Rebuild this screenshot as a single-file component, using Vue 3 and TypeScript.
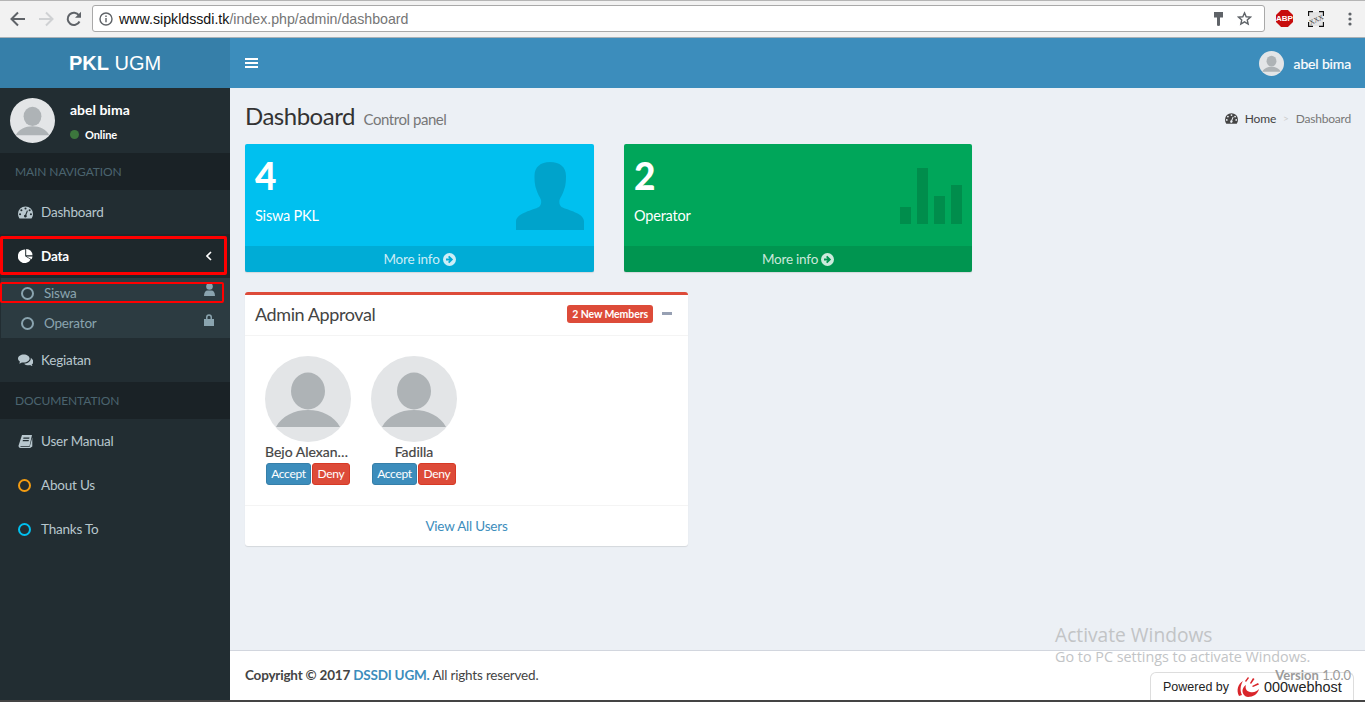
<script setup lang="ts">
const mainNav = [
  { label: 'Dashboard', icon: 'gauge' },
]
const users = [
  { name: 'Bejo Alexander', id: 1 },
  { name: 'Fadilla', id: 2 },
]
</script>

<template>
  <div class="page">
    <svg width="0" height="0" class="defs">
      <symbol id="avatar" viewBox="0 0 86 86">
        <circle cx="43" cy="43" r="43" fill="#e3e5e7" />
        <ellipse cx="43" cy="35" rx="17" ry="18.5" fill="#aeb3b6" />
        <path d="M11 71 C17 60 29 54 43 54 C57 54 69 60 75 71 Z" fill="#aeb3b6" />
      </symbol>
      <symbol id="gauge" viewBox="0 0 16 13">
        <path fill-rule="evenodd" d="M8 0a8 8 0 0 1 8 8c0 1.700-.5 3.200-1.400 4.500-.2.300-.4.500-.7.500H2.100c-.3 0-.5-.2-.7-.5A8 8 0 0 1 0 8a8 8 0 0 1 8-8zM8 1.200a1.100 1.100 0 1 0 0 2.200 1.100 1.100 0 0 0 0-2.200zM3.600 3a1.100 1.100 0 1 0 0 2.200 1.100 1.100 0 0 0 0-2.200zM12.400 3a1.100 1.100 0 1 0 0 2.200 1.100 1.100 0 0 0 0-2.200zM2.200 7.200a1.100 1.100 0 1 0 0 2.200 1.100 1.100 0 0 0 0-2.200zM13.800 7.200a1.100 1.100 0 1 0 0 2.200 1.100 1.100 0 0 0 0-2.200zM9.500 4.300l-1.800 4.500a1.500 1.500 0 1 0 1.200.4l1.700-4.500z" />
      </symbol>
    </svg>

    <header class="browser">
      <div class="nav-icons">
        <svg width="16" height="16" viewBox="0 0 16 16"><path d="M15 8H2.500M8 1.500 1.500 8 8 14.500" fill="none" stroke="#5f6368" stroke-width="2" /></svg>
        <svg width="16" height="16" viewBox="0 0 16 16"><path d="M1 8h12.500M8 1.500 14.500 8 8 14.500" fill="none" stroke="#cfd1d3" stroke-width="2" /></svg>
        <svg width="16" height="16" viewBox="0 0 16 16"><path d="M13.500 10.500A6.200 6.200 0 1 1 13 4.300" fill="none" stroke="#5f6368" stroke-width="2" /><path d="M15 0.800v6h-6z" fill="#5f6368" /></svg>
      </div>
      <div class="omnibox">
        <svg class="info" width="14" height="14" viewBox="0 0 14 14"><circle cx="7" cy="7" r="6" fill="none" stroke="#5f6368" stroke-width="1.400" /><path d="M6.300 6h1.400v4.200H6.300zM6.300 3.500h1.400v1.400H6.300z" fill="#5f6368" /></svg>
        <span class="url"><span class="host">www.sipkldssdi.tk</span>/index.php/admin/dashboard</span>
        <svg class="key" width="9" height="14" viewBox="0 0 9 14"><path d="M0 0h9v5.500H6v8L4.500 14 3 13.500v-8H0z" fill="#5f6368" /></svg>
        <svg width="15" height="15" viewBox="0 0 24 24"><path d="m12 3 2.700 6.200 6.800.6-5.100 4.500 1.500 6.600-5.900-3.500-5.900 3.500 1.500-6.600-5.100-4.500 6.800-.6z" fill="none" stroke="#5f6368" stroke-width="2.200" /></svg>
      </div>
      <div class="ext-icons">
        <div class="abp">ABP</div>
        <svg class="xxx" width="16" height="16" viewBox="0 0 16 16">
          <rect x="1" y="1" width="14" height="14" fill="#e4e4e4" />
          <path d="M.5 5V.5H5M11 .5h4.500V5M15.500 11v4.500H11M5 15.500H.5V11" fill="none" stroke="#111" stroke-width="1.300" />
          <text x="8" y="11" text-anchor="middle" transform="rotate(-25 8 8)" class="xxx-text">XXX</text>
        </svg>
        <svg width="4" height="14" viewBox="0 0 4 14"><circle cx="2" cy="2" r="1.600" fill="#5f6368" /><circle cx="2" cy="7" r="1.600" fill="#5f6368" /><circle cx="2" cy="12" r="1.600" fill="#5f6368" /></svg>
      </div>
    </header>

    <div class="topbar">
      <div class="logo"><b>PKL</b> UGM</div>
      <div class="navbar">
        <svg width="13" height="12" viewBox="0 0 13 12"><path d="M0 1h13v2H0zM0 5h13v2H0zM0 9h13v2H0z" fill="#fff" /></svg>
        <div class="nav-user">
          <svg width="25" height="25"><use href="#avatar" /></svg>
          <span>abel bima</span>
        </div>
      </div>
    </div>

    <div class="body">
      <aside class="sidebar">
        <div class="panel">
          <svg class="panel-avatar" width="45" height="45"><use href="#avatar" /></svg>
          <div class="panel-info">
            <p class="panel-name">abel bima</p>
            <p class="panel-status"><i class="dot"></i>Online</p>
          </div>
        </div>

        <div class="menu-head">MAIN NAVIGATION</div>
        <a v-for="m in mainNav" :key="m.label" class="item">
          <svg class="ic" width="15" height="13"><use href="#gauge" /></svg>{{ m.label }}
        </a>
        <a class="item active">
          <svg class="ic" width="15" height="14" viewBox="0 0 15 14"><path d="M6.600 0.500A6.800 6.800 0 1 0 12.600 10.500L7.200 7.300V.5z" fill="#fff" /><path d="M8.200 0a6.300 6.300 0 0 1 6.300 6.300H8.200z" fill="#fff" /><path d="M8.500 7.500h6a6.800 6.800 0 0 1-1 2.700z" fill="#fff" /></svg>Data
          <svg class="chev" width="6" height="10" viewBox="0 0 6 10"><path d="M5 1 1 5l4 4" fill="none" stroke="#fff" stroke-width="1.600" /></svg>
          <span class="mark mark-data"></span>
        </a>
        <div class="submenu">
          <a class="sub">
            <i class="ring sub-ring"></i>Siswa
            <svg class="sub-right" width="11" height="14" viewBox="0 0 11 14"><circle cx="5.500" cy="3.500" r="3.300" fill="#8aa4af" /><path d="M0 13c0-3.500 1.500-5.500 3.500-5.500h4c2 0 3.500 2 3.500 5.500z" fill="#8aa4af" /></svg>
            <span class="mark mark-sub"></span>
          </a>
          <a class="sub">
            <i class="ring sub-ring"></i>Operator
            <svg class="sub-right lock" width="10" height="12" viewBox="0 0 10 12"><path fill-rule="evenodd" d="M2 5V3.200a3 3 0 0 1 6 0V5h2v7H0V5zM3.500 5h3V3.200a1.500 1.500 0 0 0-3 0z" fill="#8aa4af" /></svg>
          </a>
        </div>
        <a class="item">
          <svg class="ic" width="15" height="13" viewBox="0 0 15 13"><path d="M5.800 0.500C2.600 0.500 0 2.300 0 4.600c0 1.300.8 2.400 2 3.200-.2.700-.6 1.300-1 1.800 1.100-.2 2-.6 2.800-1.200.6.100 1.300.2 2 .2 3.200 0 5.800-1.800 5.800-4C11.600 2.300 9 .5 5.800.5z" fill="#b8c7ce" /><path d="M12.700 3.700c.1.300.1.600.1.900 0 2.800-2.900 5-6.600 5.100.9 1 2.500 1.600 4.300 1.600.6 0 1.100-.1 1.600-.2.700.6 1.500.9 2.400 1-.3-.5-.6-1-.8-1.500 1-.6 1.600-1.600 1.600-2.700 0-1.700-1-3.200-2.600-4.200z" fill="#b8c7ce" /></svg>Kegiatan
        </a>

        <div class="menu-head">DOCUMENTATION</div>
        <a class="item">
          <svg class="ic" width="14" height="13" viewBox="0 0 14 13"><path fill-rule="evenodd" d="M3.500 0H13.500L11 11H2.500C2 11 1.800 11.500 2 11.800H11.200L13.800 2.500V11.500L11.500 13H2C.7 13 0 12 0 10.800zM5 2.500 4.700 3.700h6l.3-1.200zM4.400 5 4.100 6.200h6l.3-1.200z" fill="#b8c7ce" /></svg>User Manual
        </a>
        <a class="item"><i class="ring ic-ring orange"></i>About Us</a>
        <a class="item"><i class="ring ic-ring blue"></i>Thanks To</a>
      </aside>

      <div class="main">
        <section class="content">
          <div class="title-row">
            <h1>Dashboard <small>Control panel</small></h1>
            <div class="crumbs">
              <svg width="13" height="11" class="crumb-ic"><use href="#gauge" /></svg>
              <span class="home">Home</span>
              <span class="sep">&gt;</span>
              <span class="cur">Dashboard</span>
            </div>
          </div>

          <div class="boxes">
            <div class="small-box cyan">
              <div class="box-inner">
                <h3>4</h3>
                <p>Siswa PKL</p>
                <svg class="box-icon person" width="68" height="68" viewBox="0 0 68 68"><path d="M34 0c10 0 16 5 16 14 0 3 0 5-.5 8-.3 3-1 4-1.500 6-1 4-3.500 7-4.500 10-.5 3 0 5 2 7 6 3 22 6 22.500 14V68H0v-9c1-8 17-11 23-14 2-2 2.500-4 2-7-1-3-3.500-6-4.500-10-.5-2-1.200-3-1.500-6-.5-3-.5-5-.5-8 0-9 6-14 15.500-14z" /></svg>
              </div>
              <a class="more">More info
                <svg width="13" height="13" viewBox="0 0 13 13"><circle cx="6.500" cy="6.500" r="6.500" fill="currentColor" /><path d="M3 5.500h3.500L5 4l1.300-1.300 3.800 3.800-3.800 3.800L5 9l1.500-1.500H3z" class="arrow" /></svg>
              </a>
            </div>
            <div class="small-box green">
              <div class="box-inner">
                <h3>2</h3>
                <p>Operator</p>
                <svg class="box-icon bars" width="63" height="56" viewBox="0 0 63 56"><path d="M0 39h11v17H0zM17 0h11v56H17zM34 28h11v28H34zM51 17h11v39H51z" /></svg>
              </div>
              <a class="more">More info
                <svg width="13" height="13" viewBox="0 0 13 13"><circle cx="6.500" cy="6.500" r="6.500" fill="currentColor" /><path d="M3 5.500h3.500L5 4l1.300-1.300 3.800 3.800-3.800 3.800L5 9l1.500-1.500H3z" class="arrow" /></svg>
              </a>
            </div>
          </div>

          <div class="card">
            <div class="card-head">
              <h2>Admin Approval</h2>
              <span class="badge">2 New Members</span>
              <i class="minus"></i>
            </div>
            <div class="users">
              <div v-for="u in users" :key="u.id" class="user">
                <svg width="86" height="86"><use href="#avatar" /></svg>
                <div class="user-name">{{ u.name }}</div>
                <div class="btns">
                  <button class="btn accept">Accept</button><button class="btn deny">Deny</button>
                </div>
              </div>
            </div>
            <div class="card-foot"><a>View All Users</a></div>
          </div>
        </section>

        <footer class="footer">
          <span><b>Copyright © 2017 <a>DSSDI UGM.</a></b> All rights reserved.</span>
        </footer>
      </div>
    </div>

    <div class="watermark">
      <div class="wm-title">Activate Windows</div>
      <div class="wm-sub">Go to PC settings to activate Windows.</div>
    </div>
    <div class="powered">
      Powered by
      <svg width="24" height="22" viewBox="0 0 24 22" class="swirl"><path d="M3 20C0 14 2 8 7 5 4 10 4 15 6 19z" fill="#d9252a" /><path d="M8 19C5 15 7 11 10 9 9 12 10 15 14 16 18 17 21 15 23 13 22 18 17 21 12 21 10.500 21 9 20 8 19z" fill="#d9252a" /><path d="M9 5 12 1 13 2 10 6zM14 7 17 2 18.500 3 15 8zM16 10 22 7 23 8.500 17 11z" fill="#d9252a" /></svg>
      <span class="brand">000webhost</span>
    </div>
    <div class="version"><b>Version</b> 1.0.0</div>
    <div class="bottom-line"></div>
  </div>
</template>

<style>
html, body { margin: 0; height: 100%; overflow: hidden; }
</style>

<style scoped>
.page { width: 1365px; height: 702px; display: flex; flex-direction: column; position: relative; overflow: hidden; font-family: Lato, "Open Sans", sans-serif; font-size: 13.500px; letter-spacing: -.2px; color: #333; background: #ecf0f5; }
.defs { position: absolute; }
p, h1, h2, h3 { margin: 0; font-weight: 400; }
a { text-decoration: none; }

.browser { height: 38px; flex: none; box-sizing: border-box; background: #f2f2f2; border-top: 1px solid #b5b5b5; border-bottom: 1px solid #a9b1b6; display: flex; align-items: center; padding: 0 0 1px 10px; letter-spacing: 0; }
.nav-icons { display: flex; gap: 12px; width: 82px; }
.omnibox { width: 1173px; height: 27px; box-sizing: border-box; background: #fff; border: 1px solid #a9a9a9; border-radius: 3px; display: flex; align-items: center; padding: 0 12px 0 6px; }
.info { margin-right: 6px; }
.url { flex: 1; font-family: "Liberation Sans", sans-serif; font-size: 14.200px; color: #757575; }
.host { color: #111; }
.key { margin-right: 14px; }
.ext-icons { flex: 1; display: flex; align-items: center; padding-left: 11px; }
.abp { width: 17px; height: 17px; background: #c70d0d; clip-path: polygon(30% 0, 70% 0, 100% 30%, 100% 70%, 70% 100%, 30% 100%, 0 70%, 0 30%); color: #fff; font: 700 8px/17px "Liberation Sans", sans-serif; text-align: center; margin-right: 15px; }
.xxx { margin-right: 24px; }
.xxx-text { font: 7px "Liberation Serif", serif; fill: #333; }

.topbar { height: 50px; flex: none; display: flex; letter-spacing: 0; }
.logo { width: 230px; background: #367fa9; color: #fff; font: 20px/50px "Liberation Sans", sans-serif; text-align: center; }
.navbar { flex: 1; background: #3c8dbc; display: flex; align-items: center; justify-content: space-between; padding: 0 14px 0 15px; color: #fff; }
.nav-user { display: flex; align-items: center; gap: 10px; font-size: 14px; letter-spacing: -.15px; -webkit-text-stroke: .2px #fff; }

.body { flex: 1; display: flex; min-height: 0; }
.sidebar { width: 230px; flex: none; background: #222d32; color: #b8c7ce; }
.panel { height: 65px; box-sizing: border-box; padding: 10px; display: flex; gap: 15px; }
.panel-name { color: #fff; font-weight: 700; font-size: 14px; line-height: 17px; margin-top: 3px; letter-spacing: 0; }
.panel-status { color: #fff; font-size: 11px; margin-top: 10px; display: flex; align-items: center; font-weight: 700; letter-spacing: -.1px; }
.dot { width: 9px; height: 9px; border-radius: 50%; background: #3c763d; margin-right: 6px; }
.menu-head { height: 37px; box-sizing: border-box; padding-left: 15px; background: #1a2226; color: #4b646f; font-size: 12px; line-height: 37px; letter-spacing: -.1px; }
.item { position: relative; display: flex; align-items: center; height: 44px; box-sizing: border-box; padding-left: 18px; color: #b8c7ce; }
.ic { width: 15px; margin-right: 8px; fill: #b8c7ce; }
.active { background: #1e282c; color: #fff; font-weight: 700; }
.active .ic { fill: #fff; }
.chev { position: absolute; right: 18px; top: 17px; }
.mark { position: absolute; border: 3px solid #f00; box-sizing: border-box; border-radius: 2px; pointer-events: none; }
.mark-data { left: 0; top: 2px; width: 227px; height: 39px; }
.mark-sub { left: -1px; top: 4px; width: 224px; height: 21px; border-width: 2.500px; }
.submenu { background: #2c3b41; height: 60px; margin-left: 1px; }
.sub { position: relative; display: flex; align-items: center; height: 30px; box-sizing: border-box; padding-left: 20px; color: #8aa4af; }
.ring { display: block; box-sizing: border-box; border-radius: 50%; border: 2px solid; }
.sub-ring { width: 13px; height: 13px; margin-right: 10px; color: #8aa4af; }
.sub-right { position: absolute; right: 15px; top: 5px; }
.lock { top: 6px; right: 16px; }
.ic-ring { width: 13px; height: 13px; margin-right: 10px; }
.orange { color: #f39c12; }
.blue { color: #00c0ef; }

.main { flex: 1; display: flex; flex-direction: column; min-width: 0; }
.content { flex: 1; padding: 0 14px 0 15px; }
.title-row { height: 56px; display: flex; justify-content: space-between; }
h1 { font-size: 24px; line-height: 28px; margin-top: 14px; letter-spacing: -.5px; }
small { font-size: 15px; color: #777; letter-spacing: -.45px; margin-left: 3px; }
.crumbs { display: flex; align-items: center; gap: 7px; font-size: 12px; height: 14px; margin-top: 23px; color: #444; letter-spacing: -.2px; }
.crumb-ic { fill: #444; }
.home { margin-left: 0; }
.sep { color: #ccc; font-size: 10px; }
.cur { color: #777; }

.boxes { display: flex; gap: 30px; }
.small-box { width: 349px; height: 128px; border-radius: 2px; color: #fff; display: flex; flex-direction: column; box-shadow: 0 1px 1px rgba(0,0,0,.1); }
.green { width: 348px; background: #00a65a; }
.cyan { background: #00c0ef; }
.box-inner { flex: 1; position: relative; padding: 10px; }
h3 { font-size: 37px; font-weight: 900; line-height: 44px; }
.box-inner p { margin-top: 8px; font-size: 14.500px; line-height: 20px; }
.box-icon { position: absolute; fill: rgba(0,0,0,.15); }
.person { right: 10px; top: 18px; }
.bars { right: 9px; top: 24px; }
.more { height: 26px; box-sizing: border-box; display: flex; align-items: center; justify-content: center; gap: 3px; background: rgba(0,0,0,.1); color: rgba(255,255,255,.8); }
.cyan .arrow { fill: #00acd7; }
.green .arrow { fill: #009551; }

.card { width: 443px; height: 254px; margin-top: 20px; box-sizing: border-box; background: #fff; border-top: 3px solid #dd4b39; border-radius: 3px; box-shadow: 0 1px 1px rgba(0,0,0,.1); display: flex; flex-direction: column; }
.card-head { height: 41px; box-sizing: border-box; flex: none; display: flex; align-items: center; border-bottom: 1px solid #f4f4f4; padding: 0 16px 3px 10px; }
h2 { font-size: 18px; flex: 1; color: #444; letter-spacing: -.4px; }
.badge { background: #dd4b39; color: #fff; font-size: 10.500px; font-weight: 700; height: 18px; line-height: 18px; padding: 0 5px; border-radius: 3px; margin-right: 9px; letter-spacing: -.1px; }
.minus { width: 10px; height: 2.500px; background: #97a0b3; }
.users { flex: 1; display: flex; padding: 20px 10px 0 10px; gap: 0; }
.user { width: 106px; display: flex; flex-direction: column; align-items: center; }
.user-name { width: 86px; margin-top: 1px; font-size: 14px; line-height: 17px; letter-spacing: 0; text-align: center; white-space: nowrap; overflow: hidden; text-overflow: ellipsis; color: #444; -webkit-text-stroke: .2px #444; }
.btns { display: flex; gap: 1px; margin-top: 3px; }
.btn { height: 22px; box-sizing: border-box; padding: 0; font: 12px/20px Lato, sans-serif; letter-spacing: -.3px; color: #fff; border-radius: 3px; border: 1px solid; }
.accept { width: 45px; background: #3c8dbc; border-color: #367fa9; }
.deny { width: 38px; background: #dd4b39; border-color: #d73925; }
.card-foot { height: 41px; box-sizing: border-box; flex: none; display: flex; align-items: center; justify-content: center; border-top: 1px solid #f4f4f4; color: #3c8dbc; }

.footer { height: 52px; flex: none; box-sizing: border-box; background: #fff; border-top: 1px solid #d2d6de; display: flex; align-items: center; padding: 0 14px 3px 15px; color: #444; }
.footer a { color: #3c8dbc; }

.watermark { position: absolute; left: 1055px; top: 623px; color: #c2c4c6; font-family: "Open Sans", sans-serif; letter-spacing: 0; }
.wm-title { font-size: 19.200px; line-height: 24px; }
.wm-sub { font-size: 14.350px; line-height: 20px; }
.powered { position: absolute; left: 1150px; top: 672px; width: 204px; height: 28px; box-sizing: border-box; background: #fff; border: 1px solid #ddd; border-bottom: 0; border-radius: 6px 6px 0 0; display: flex; align-items: center; padding-left: 12px; font: 12.500px "Liberation Sans", sans-serif; letter-spacing: 0; color: #222; }
.swirl { margin: 0 4px 0 7px; }
.brand { font-size: 14.400px; }
.version { position: absolute; right: 14px; top: 668px; font-size: 13px; line-height: 15px; color: #9a9a9a; letter-spacing: 0; }
.bottom-line { position: absolute; left: 0; right: 0; bottom: 0; height: 2px; background: #444; }
</style>
